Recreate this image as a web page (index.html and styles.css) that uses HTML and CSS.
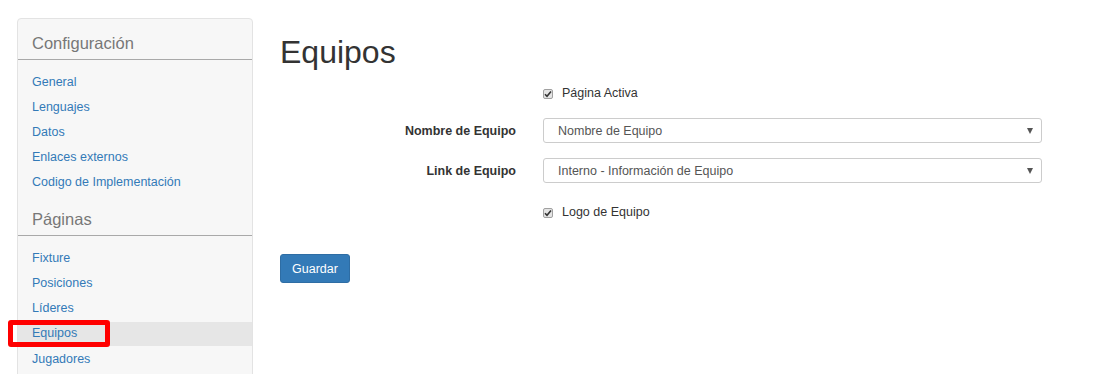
FILE: index.html
```html
<!DOCTYPE html>
<html lang="es">
<head>
  <meta charset="UTF-8" />
  <title>Equipos</title>
  <link rel="stylesheet" href="styles.css">
</head>
<body>

  <div class="page">

    <!-- Menu lateral -->
    <aside class="sidebar">
      <h4 class="side-title first">Configuración</h4>
      <ul class="side-list">
        <li><a href="#">General</a></li>
        <li><a href="#">Lenguajes</a></li>
        <li><a href="#">Datos</a></li>
        <li><a href="#">Enlaces externos</a></li>
        <li><a href="#">Codigo de Implementación</a></li>
      </ul>
      <h4 class="side-title">Páginas</h4>
      <ul class="side-list">
        <li><a href="#">Fixture</a></li>
        <li><a href="#">Posiciones</a></li>
        <li><a href="#">Líderes</a></li>
        <li class="active"><a href="#">Equipos</a><span class="marker"></span></li>
        <li><a href="#">Jugadores</a></li>
      </ul>
    </aside>

    <!-- Contenido -->
    <main class="main">
      <h1>Equipos</h1>

      <div class="form">
        <div class="row row-check">
          <span></span>
          <label class="check">
            <span class="box"><svg width="8" height="8" viewBox="0 0 8 8"><path d="M1 4.2 L3 6.3 L7 1.5" fill="none" stroke="#333" stroke-width="1.6"/></svg></span>
            Página Activa
          </label>
        </div>

        <div class="row row-select">
          <label class="label">Nombre de Equipo</label>
          <div class="select">
            <span>Nombre de Equipo</span>
            <span class="arrow"></span>
          </div>
        </div>

        <div class="row row-select">
          <label class="label">Link de Equipo</label>
          <div class="select">
            <span>Interno - Información de Equipo</span>
            <span class="arrow"></span>
          </div>
        </div>

        <div class="row row-check last">
          <span></span>
          <label class="check">
            <span class="box"><svg width="8" height="8" viewBox="0 0 8 8"><path d="M1 4.2 L3 6.3 L7 1.5" fill="none" stroke="#333" stroke-width="1.6"/></svg></span>
            Logo de Equipo
          </label>
        </div>
      </div>

      <button class="btn">Guardar</button>
    </main>

  </div>

</body>
</html>
```

FILE: styles.css
```css
* {
  box-sizing: border-box;
}

body {
  margin: 0;
  font-family: 'Liberation Sans', Arial, sans-serif;
  font-size: 12.5px;
  color: #333;
  background: #fff;
}

.page {
  display: flex;
  height: 100vh;
  overflow: hidden;
  padding: 18px 0 0 17px;
  gap: 27px;
}

/* Menu lateral */
.sidebar {
  width: 236px;
  height: 380px;
  flex-shrink: 0;
  background: #f7f7f7;
  border: 1px solid #e3e3e3;
  border-radius: 4px;
}

.side-title {
  margin: 0;
  padding: 14px 14px 6px;
  font-size: 16.5px;
  font-weight: normal;
  line-height: 20px;
  color: #777;
  border-bottom: 1px solid #a9a9a9;
}

.side-list {
  list-style: none;
  margin: 0;
  padding: 10px 0 0;
}

.side-list li {
  position: relative;
  height: 25px;
  line-height: 25px;
  padding-left: 14px;
}

.side-list a {
  color: #337ab7;
  text-decoration: none;
}

.side-list li.active {
  background: #e6e6e6;
  margin-top: 1px;
  height: 24px;
  line-height: 22px;
}

.side-list li.active + li {
  line-height: 26px;
}

.marker {
  position: absolute;
  left: -10px;
  top: -2px;
  width: 102px;
  height: 27px;
  border: 5px solid #f00;
  border-radius: 3px;
}

/* Contenido */
.main {
  flex: 1;
}

h1 {
  margin: 16px 0 13px;
  font-size: 32px;
  font-weight: normal;
  line-height: 36px;
  color: #333;
}

.form {
  display: flex;
  flex-direction: column;
}

.row {
  display: grid;
  grid-template-columns: 236px 499px;
  column-gap: 27px;
  align-items: center;
}

.row-check {
  height: 20px;
  margin-bottom: 15px;
}

.row-select {
  margin-bottom: 15px;
}

.row-select + .row-check {
  margin-top: 4px;
}

.row.last {
  margin-bottom: 32px;
}

.label {
  text-align: right;
  font-weight: bold;
  padding-top: 1px;
}

.check {
  display: flex;
  align-items: center;
  gap: 9px;
  color: #333;
}

.box {
  width: 10px;
  height: 10px;
  margin-top: 2px;
  border: 1px solid #a0a0a0;
  border-radius: 2px;
  background: #e4e4e4;
  display: flex;
  align-items: center;
  justify-content: center;
}

.select {
  height: 25px;
  display: flex;
  align-items: center;
  justify-content: space-between;
  padding: 0 8px 0 14px;
  border: 1px solid #ccc;
  border-radius: 3px;
  color: #555;
  background: #fff;
}

.arrow {
  width: 0;
  height: 0;
  border-left: 3.5px solid transparent;
  border-right: 3.5px solid transparent;
  border-top: 6px solid #555;
  margin-top: 1px;
}

.btn {
  display: block;
  height: 29px;
  padding: 0 11px;
  font-family: inherit;
  font-size: 12.5px;
  color: #fff;
  background: #337ab7;
  border: 1px solid #2e6da4;
  border-radius: 3px;
}
```
